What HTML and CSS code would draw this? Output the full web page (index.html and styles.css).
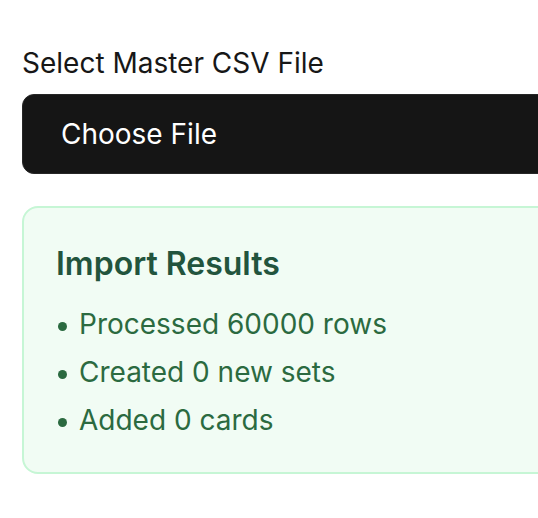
FILE: index.html
```html
<!DOCTYPE html>
<html lang="en">
<head>
<meta charset="utf-8">
<title>Import Master CSV</title>
<link rel="stylesheet" href="styles.css">
</head>
<body>
<main class="page">
  <div class="field">
    <label class="field-label" for="csv">Select Master CSV File</label>
    <div class="file-button" id="csv">Choose File</div>
  </div>
  <section class="results">
    <h2 class="results-title">Import Results</h2>
    <ul class="results-list">
      <li>Processed 60000 rows</li>
      <li>Created 0 new sets</li>
      <li>Added 0 cards</li>
    </ul>
  </section>
</main>
</body>
</html>
```

FILE: styles.css
```css
html, body {
  margin: 0;
  padding: 0;
  background: #ffffff;
  overflow: hidden;
}

body {
  font-family: Inter, "Noto Sans", sans-serif;
  color: #171717;
}

.page {
  width: 600px;
  padding: 42px 0 0 22px;
  box-sizing: border-box;
}

.field {
  display: flex;
  flex-direction: column;
}

.field-label {
  font-size: 28px;
  line-height: 42px;
  margin-bottom: 10px;
  color: #171717;
}

.file-button {
  height: 80px;
  box-sizing: border-box;
  display: flex;
  align-items: center;
  padding: 0 38px 1px;
  background: #151515;
  border: 1.5px solid #262626;
  border-radius: 12px;
  color: #ffffff;
  font-size: 28px;
  line-height: 42px;
}

.results {
  margin-top: 32px;
  background: #f1fcf4;
  border: 2px solid #c6f6d5;
  border-radius: 16px;
  padding: 32px 32px 31px;
  color: #2b6a40;
}

.results-title {
  margin: 0 0 15px;
  font-size: 32px;
  line-height: 48px;
  font-weight: 600;
  color: #22543d;
}

.results-list {
  margin: 0;
  padding: 0;
  list-style: none;
  display: flex;
  flex-direction: column;
  gap: 6px;
}

.results-list li {
  font-size: 28px;
  line-height: 42px;
}

.results-list li::before {
  content: "";
  display: inline-block;
  width: 9px;
  height: 9px;
  border-radius: 50%;
  background: currentColor;
  vertical-align: middle;
  margin: 0 12px 0 2px;
}
```
